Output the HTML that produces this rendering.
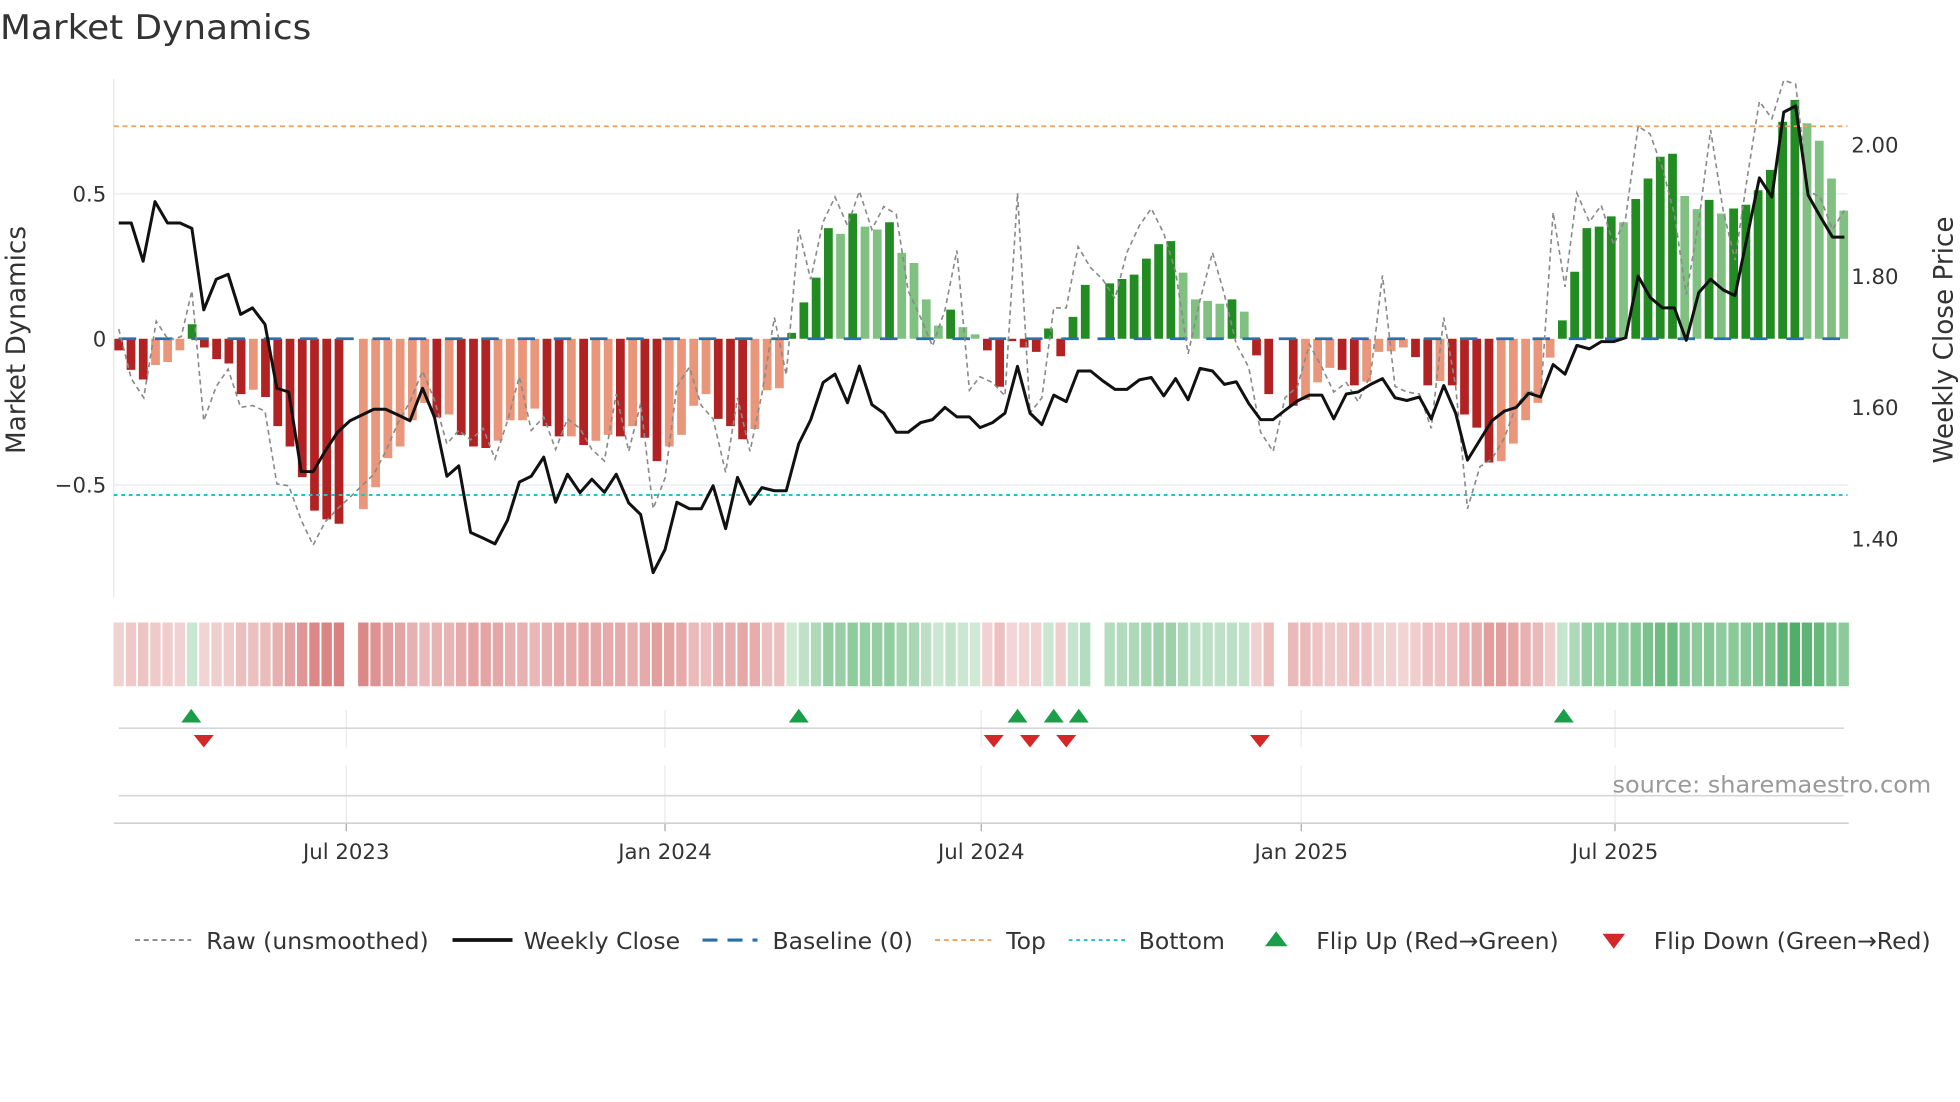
<!DOCTYPE html>
<html><head><meta charset="utf-8"><style>
html,body{margin:0;padding:0;background:#fff;width:1960px;height:1102px;overflow:hidden}
svg{display:block}
text{font-family:"DejaVu Sans","Liberation Sans",sans-serif;fill:#333}
</style></head><body>
<svg id="s" width="1960" height="1102" viewBox="0 0 1568 881.6" xmlns="http://www.w3.org/2000/svg">
<text x="0" y="31" font-size="27" textLength="249" lengthAdjust="spacingAndGlyphs">Market Dynamics</text>
<g id="grid"></g>
<g id="bars"></g>
<g id="lines"></g>
<text x="85" y="161" font-size="17" text-anchor="end">0.5</text>
<text x="85" y="277" font-size="17" text-anchor="end">0</text>
<text x="85" y="394" font-size="17" text-anchor="end">−0.5</text>
<text x="1481" y="122" font-size="17">2.00</text>
<text x="1481" y="227" font-size="17">1.80</text>
<text x="1481" y="332" font-size="17">1.60</text>
<text x="1481" y="437" font-size="17">1.40</text>
<text transform="translate(20,272) rotate(-90)" font-size="21" text-anchor="middle">Market Dynamics</text>
<text transform="translate(1562,272) rotate(-90)" font-size="21" text-anchor="middle">Weekly Close Price</text>
<g id="strip"></g>
<g id="lower"></g>
<text x="1545" y="634" font-size="18.5" text-anchor="end" textLength="255" lengthAdjust="spacingAndGlyphs" style="fill:#999">source: sharemaestro.com</text>
<g font-size="17" text-anchor="middle">
<text x="277" y="687">Jul 2023</text><text x="532" y="687">Jan 2024</text><text x="785" y="687">Jul 2024</text><text x="1041" y="687">Jan 2025</text><text x="1292" y="687">Jul 2025</text>
</g>
<g font-size="18.8">
<line x1="108" y1="752" x2="153" y2="752" stroke="#888" stroke-width="1.5" stroke-dasharray="4,3"/>
<text x="165" y="759">Raw (unsmoothed)</text>
<line x1="362" y1="752" x2="410" y2="752" stroke="#111" stroke-width="3"/>
<text x="419" y="759">Weekly Close</text>
<line x1="562" y1="752" x2="606" y2="752" stroke="#2a6fa8" stroke-width="2.5" stroke-dasharray="12,8"/>
<text x="618" y="759">Baseline (0)</text>
<line x1="748" y1="752" x2="793" y2="752" stroke="#f0a060" stroke-width="1.5" stroke-dasharray="4,3"/>
<text x="805" y="759">Top</text>
<line x1="855" y1="752" x2="900" y2="752" stroke="#22c0d8" stroke-width="1.5" stroke-dasharray="3,3"/>
<text x="911" y="759">Bottom</text>
<polygon points="1012,757 1030,757 1021,745" fill="#1a9e4a"/>
<text x="1053" y="759">Flip Up (Red→Green)</text>
<polygon points="1282,747 1300,747 1291,759" fill="#d62728"/>
<text x="1323" y="759">Flip Down (Green→Red)</text>
</g>
</svg>
<script>
var NS="http://www.w3.org/2000/svg";
function el(p,t,a){var e=document.createElementNS(NS,t);for(var k in a)e.setAttribute(k,a[k]);document.getElementById(p).appendChild(e);return e;}
el("grid","line",{x1:91,y1:63,x2:91,y2:478,stroke:"#e6e6e6","stroke-width":1});
el("grid","line",{x1:91,y1:155,x2:1478,y2:155,stroke:"#eef0f4","stroke-width":1.5});
el("grid","line",{x1:91,y1:388,x2:1478,y2:388,stroke:"#eef0f4","stroke-width":1.5});
var V=[-0.04,1,-0.107,1,-0.14,1,-0.09,0,-0.08,0,-0.04,0,0.05,1,-0.03,1,-0.07,1,-0.085,1,-0.19,1,-0.175,0,-0.2,1,-0.30,1,-0.37,1,-0.475,1,-0.59,1,-0.62,1,-0.635,1,0,0,
-0.585,0,-0.51,0,-0.41,0,-0.37,0,-0.28,0,-0.22,0,-0.27,1,-0.26,0,-0.33,1,-0.37,1,-0.375,1,-0.35,0,-0.28,0,-0.28,0,-0.24,0,-0.30,1,-0.335,1,-0.335,0,-0.365,1,-0.35,0,
-0.33,0,-0.335,1,-0.30,0,-0.34,1,-0.42,1,-0.37,0,-0.33,0,-0.23,0,-0.19,0,-0.275,1,-0.30,1,-0.345,1,-0.31,0,-0.177,0,-0.17,0,0.02,1,0.125,1,0.21,1,0.38,1,0.36,0,
0.43,1,0.385,0,0.375,0,0.40,1,0.295,0,0.26,0,0.135,0,0.045,0,0.10,1,0.04,0,0.015,0,-0.04,1,-0.165,1,-0.008,1,-0.03,1,-0.045,1,0.035,1,-0.06,1,0.075,1,0.185,1,0,0,
0.19,1,0.205,1,0.22,1,0.275,1,0.325,1,0.335,1,0.227,0,0.135,0,0.13,0,0.12,0,0.135,1,0.093,0,-0.057,1,-0.19,1,0,0,-0.23,1,-0.21,0,-0.15,0,-0.10,0,-0.107,1,-0.16,1,
-0.147,0,-0.045,0,-0.043,0,-0.03,0,-0.063,1,-0.16,1,-0.145,0,-0.16,1,-0.26,1,-0.305,1,-0.425,1,-0.42,0,-0.36,0,-0.28,0,-0.22,0,-0.065,0,0.063,1,0.23,1,0.38,1,0.385,1,
0.42,1,0.40,0,0.48,1,0.55,1,0.625,1,0.635,1,0.49,0,0.445,0,0.477,1,0.43,0,0.447,1,0.46,1,0.51,1,0.58,1,0.745,1,0.82,1,0.74,0,0.68,0,0.55,0,0.44,0];
var N=V.length/2, x0=95, dx=(1475-95)/(N-1);
for(var i=0;i<N;i++){
 var v=V[2*i],d=V[2*i+1],x=x0+i*dx;
 if(v!==0){
  var c=v>0?(d?"#228b22":"#80c080"):(d?"#b22222":"#e9967a");
  var y=271-v*233;
  el("bars","rect",{x:(x-3.5).toFixed(1),y:Math.min(y,271).toFixed(1),width:7,height:Math.abs(271-y).toFixed(1),fill:c});
  var op=Math.min(1,0.22+0.6*Math.abs(v)/0.8);
  el("strip","rect",{x:(x-4.2).toFixed(1),y:498,width:8.3,height:51,fill:v>0?"#2e9e4a":"#c94a4a","fill-opacity":op.toFixed(2)});
 }
}
el("lines","line",{x1:95,y1:271,x2:1475,y2:271,stroke:"#2a6fa8","stroke-width":2.2,"stroke-dasharray":"14,15"});
el("lines","line",{x1:91,y1:101,x2:1478,y2:101,stroke:"#f0a060","stroke-width":1.4,"stroke-dasharray":"4,3"});
el("lines","line",{x1:91,y1:396,x2:1478,y2:396,stroke:"#22c0d8","stroke-width":1.6,"stroke-dasharray":"3,3"});
function pts(a,off){var s=[];for(var i=0;i<a.length;i+=2)s.push((off+a[i]/2).toFixed(1)+","+(a[i+1]*0.306).toFixed(1));return s;}
var R1=[190,860,210,990,230,1040,250,840,270,890,290,880,307,760,326,1100,346,1010,365,965,385,1065,404,1060,424,1075,443,1265,462,1270,482,1360,501,1425,520,1365,540,1330,560,1300,579,1270,598,1240,617,1180,637,1105,656,1050,676,970,695,1045,715,1160,734,1125,753,1150,773,1120,792,1200,812,1100,831,985,850,1125,870,1090,889,1175,908,1095,928,1120,947,1175,967,1205,986,1030,1006,1180,1025,1055,1045,1330,1064,1250,1083,1010,1103,960,1122,1060,1141,1095,1161,1235,1180,1040,1200,1180,1219,1030,1239,830,1258,980,1278,600,1297,730,1317,580,1336,515,1356,590,1375,500,1395,600,1414,540,1434,560,1453,760,1473,830,1492,905,1512,810,1531,655,1551,1020];
var R2=[0,985,20,1000,40,1035,60,505,80,1080,99,1040,118,805,138,805,157,645,177,700,196,730,216,780,235,660,255,590,274,545,294,610,313,710,333,925,352,785,372,660,391,770,410,900,430,960,449,1130,469,1180,488,1040,508,1010,527,900,547,960,566,1025,586,1000,605,1050,625,980,644,720,664,1010,683,1025,703,1030,722,1120,742,830,761,1010,780,1330,800,1220,819,1200,839,1145,858,1060,878,1020,897,1040,917,555,936,750,955,505,975,580,994,537,1014,640,1033,570,1053,330,1072,350,1092,440,1111,560,1130,770,1150,580,1169,340,1189,550,1208,680,1228,460,1247,265,1267,310,1286,210,1305,220,1325,500,1344,515,1364,600,1383,550];
el("lines","polyline",{points:pts(R1,0).concat(pts(R2,784)).join(" "),fill:"none",stroke:"#8a8a8a","stroke-width":1.3,"stroke-dasharray":"4,3"});
var P1=[190,583,210,583,229,683,248,527,268,583,288,583,307,597,326,810,346,730,365,717,385,822,404,805,424,848,443,1015,462,1025,482,1233,501,1233,520,1180,540,1130,560,1100,579,1085,598,1070,617,1070,637,1085,656,1100,676,1015,695,1090,715,1245,734,1218,753,1392,773,1407,792,1422,812,1360,831,1260,850,1245,870,1195,889,1313,908,1240,928,1288,947,1253,967,1287,986,1240,1006,1315,1025,1345,1045,1497,1064,1437,1083,1313,1103,1330,1122,1330,1141,1270,1161,1382,1180,1248,1200,1318,1219,1275,1239,1283,1258,1283,1278,1160,1297,1098,1317,1000,1336,978,1356,1053,1375,957,1395,1058,1414,1080,1434,1130,1453,1130,1473,1105,1492,1097,1512,1065,1531,1090,1551,1090];
var P2=[0,1118,20,1105,40,1080,60,958,80,1080,99,1110,118,1033,138,1050,157,970,177,970,196,995,216,1018,235,1018,255,993,274,987,294,1035,313,990,333,1045,352,963,372,970,391,1005,410,998,430,1055,449,1097,469,1097,488,1073,508,1048,527,1033,547,1033,566,1095,586,1030,605,1025,625,1005,644,990,664,1040,683,1047,703,1038,722,1095,742,1008,761,1080,780,1203,800,1150,819,1100,839,1075,858,1065,878,1028,897,1038,917,953,936,978,955,903,975,912,994,893,1014,893,1033,883,1053,722,1072,777,1092,805,1111,805,1130,890,1150,765,1169,730,1189,758,1208,773,1228,615,1247,465,1267,515,1286,293,1305,277,1325,510,1344,565,1364,620,1383,620];
el("lines","polyline",{points:pts(P1,0).concat(pts(P2,784)).join(" "),fill:"none",stroke:"#111","stroke-width":2.4,"stroke-linejoin":"round"});
[277,532,785,1041,1292].forEach(function(x){
 el("lower","line",{x1:x,y1:568,x2:x,y2:598,stroke:"#e8eaee","stroke-width":1});
 el("lower","line",{x1:x,y1:612,x2:x,y2:658,stroke:"#e8eaee","stroke-width":1});
 el("lower","line",{x1:x,y1:658,x2:x,y2:665,stroke:"#aaa","stroke-width":1});
});
el("lower","line",{x1:95,y1:582.5,x2:1475,y2:582.5,stroke:"#d4d6da","stroke-width":1.3});
el("lower","line",{x1:95,y1:636.5,x2:1475,y2:636.5,stroke:"#d4d6da","stroke-width":1.3});
el("lower","line",{x1:91,y1:658.5,x2:1479,y2:658.5,stroke:"#cfd1d5","stroke-width":1.3});
[153,639,814,843,863,1251].forEach(function(x){el("lower","polygon",{points:(x-8)+",578 "+(x+8)+",578 "+x+",567",fill:"#1a9e4a"});});
[163,795,824,853,1008].forEach(function(x){el("lower","polygon",{points:(x-8)+",588 "+(x+8)+",588 "+x+",598",fill:"#d62728"});});
</script>
</body></html>
